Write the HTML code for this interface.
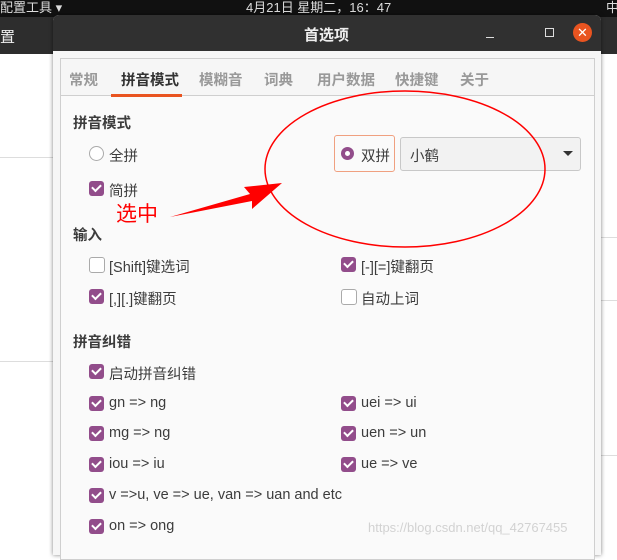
<!DOCTYPE html>
<html><head><meta charset="utf-8"><style>
body{margin:0;width:617px;height:549px;position:relative;overflow:hidden;background:#fff;font-family:"Liberation Sans","Noto Sans CJK SC",sans-serif;}
.a{position:absolute;}
.t{font-size:14.5px;color:#3c3c3c;white-space:nowrap;}
.cb{position:absolute;width:15px;height:15px;border-radius:3px;background:#924d8b;}
.cb::after{content:"";position:absolute;left:3px;top:3px;width:7px;height:4px;border-left:2px solid #fff;border-bottom:2px solid #fff;transform:rotate(-45deg);}
.ub{position:absolute;width:14px;height:14px;border-radius:3px;border:1px solid #aaa;background:#fff;}
.h{font-size:14.5px;font-weight:bold;color:#3c3c3c;}
</style></head><body>
<div class="a" style="left:0;top:0;width:617px;height:17px;background:#111;"></div>
<div class="a t" style="left:0;top:-3px;color:#ddd;font-size:13px;">配置工具 ▾</div>
<div class="a t" style="left:246px;top:-3px;color:#ddd;font-size:13px;">4月21日 星期二，16：47</div>
<div class="a t" style="left:606px;top:-3px;color:#ddd;font-size:13px;">中</div>
<div class="a" style="left:0;top:17px;width:617px;height:37px;background:#2d2d2d;"></div>
<div class="a t" style="left:0;top:26px;color:#eee;font-size:15px;">置</div>
<div class="a" style="left:0;top:157px;width:53px;height:1px;background:#ddd;"></div>
<div class="a" style="left:0;top:361px;width:53px;height:1px;background:#ddd;"></div>
<div class="a" style="left:601px;top:237px;width:16px;height:1px;background:#ddd;"></div>
<div class="a" style="left:601px;top:300px;width:16px;height:1px;background:#ddd;"></div>
<div class="a" style="left:601px;top:455px;width:16px;height:1px;background:#ddd;"></div>
<div class="a" style="left:53px;top:15px;width:548px;height:540px;background:#f6f6f6;border-radius:6px 6px 0 0;box-shadow:0 0 4px rgba(0,0,0,.5);"></div>
<div class="a" style="left:53px;top:15px;width:548px;height:36px;background:#303030;border-radius:6px 6px 0 0;"></div>
<div class="a t" style="left:304px;top:24px;color:#eee;font-weight:bold;font-size:15px;">首选项</div>
<div class="a" style="left:486px;top:37px;width:8px;height:1px;background:#ddd;"></div>
<div class="a" style="left:545px;top:28px;width:7px;height:7px;border:1px solid #ddd;"></div>
<div class="a" style="left:573px;top:23px;width:19px;height:19px;border-radius:50%;background:#e95420;color:#fff;font-size:13px;text-align:center;line-height:19px;">✕</div>
<div class="a" style="left:60px;top:58px;width:533px;height:500px;border:1px solid #cfcfcf;background:#fafafa;"></div>
<div class="a" style="left:61px;top:59px;width:533px;height:36px;background:#f6f6f6;border-bottom:1px solid #cfcfcf;"></div>
<div class="a" style="left:111px;top:94px;width:71px;height:3px;background:#e95420;"></div>
<div class="a t" style="left:69px;top:69px;color:#999;font-weight:bold;">常规</div>
<div class="a t" style="left:121px;top:69px;color:#333;font-weight:bold;">拼音模式</div>
<div class="a t" style="left:199px;top:69px;color:#999;font-weight:bold;">模糊音</div>
<div class="a t" style="left:264px;top:69px;color:#999;font-weight:bold;">词典</div>
<div class="a t" style="left:317px;top:69px;color:#999;font-weight:bold;">用户数据</div>
<div class="a t" style="left:395px;top:69px;color:#999;font-weight:bold;">快捷键</div>
<div class="a t" style="left:460px;top:69px;color:#999;font-weight:bold;">关于</div>
<div class="a h" style="left:73px;top:112px;">拼音模式</div>
<div class="a" style="left:89px;top:146px;width:13px;height:13px;border-radius:50%;border:1px solid #aaa;background:#fff;"></div>
<div class="a t" style="left:109px;top:145px;">全拼</div>
<div class="cb" style="left:89px;top:181px;"></div><div class="a t" style="left:109px;top:180px;">简拼</div>
<div class="a" style="left:334px;top:135px;width:59px;height:35px;border:1px solid #f0a080;border-radius:3px;background:#fafafa;"></div>
<div class="a" style="left:341px;top:147px;width:13px;height:13px;border-radius:50%;background:#924d8b;"><div class="a" style="left:4px;top:4px;width:5px;height:5px;border-radius:50%;background:#fff;"></div></div>
<div class="a t" style="left:361px;top:145px;">双拼</div>
<div class="a" style="left:400px;top:137px;width:179px;height:32px;border:1px solid #c8c8c8;border-radius:3px;background:#f2f2f2;"></div>
<div class="a t" style="left:410px;top:145px;">小鹤</div>
<div class="a" style="left:563px;top:151px;width:0;height:0;border-left:5px solid transparent;border-right:5px solid transparent;border-top:5px solid #333;"></div>
<div class="a h" style="left:73px;top:224px;">输入</div>
<div class="ub" style="left:89px;top:257px;"></div><div class="a t" style="left:109px;top:256px;">[Shift]键选词</div>
<div class="cb" style="left:341px;top:257px;"></div><div class="a t" style="left:361px;top:256px;">[-][=]键翻页</div>
<div class="cb" style="left:89px;top:289px;"></div><div class="a t" style="left:109px;top:288px;">[,][.]键翻页</div>
<div class="ub" style="left:341px;top:289px;"></div><div class="a t" style="left:361px;top:288px;">自动上词</div>
<div class="a h" style="left:73px;top:331px;">拼音纠错</div>
<div class="cb" style="left:89px;top:364px;"></div><div class="a t" style="left:109px;top:363px;">启动拼音纠错</div>
<div class="cb" style="left:89px;top:396px;"></div><div class="a t" style="left:109px;top:395px;">gn =&gt; ng</div>
<div class="cb" style="left:341px;top:396px;"></div><div class="a t" style="left:361px;top:395px;">uei =&gt; ui</div>
<div class="cb" style="left:89px;top:426px;"></div><div class="a t" style="left:109px;top:425px;">mg =&gt; ng</div>
<div class="cb" style="left:341px;top:426px;"></div><div class="a t" style="left:361px;top:425px;">uen =&gt; un</div>
<div class="cb" style="left:89px;top:457px;"></div><div class="a t" style="left:109px;top:456px;">iou =&gt; iu</div>
<div class="cb" style="left:341px;top:457px;"></div><div class="a t" style="left:361px;top:456px;">ue =&gt; ve</div>
<div class="cb" style="left:89px;top:488px;"></div><div class="a t" style="left:109px;top:487px;">v =&gt;u, ve =&gt; ue, van =&gt; uan and etc</div>
<div class="cb" style="left:89px;top:519px;"></div><div class="a t" style="left:109px;top:518px;">on =&gt; ong</div>
<div class="a" style="left:368px;top:520px;font-size:13px;color:rgba(200,200,200,.8);">https://blog.csdn.net/qq_42767455</div>
<svg class="a" style="left:0;top:0" width="617" height="549">
<ellipse cx="405" cy="169" rx="140" ry="78" fill="none" stroke="#f00" stroke-width="1.5"/>
<polygon points="170,217 250,194 244,187 282,183 252,209 252,201" fill="#f00"/>
</svg>
<div class="a" style="left:116px;top:198px;font-size:21px;color:#f00;">选中</div>
</body></html>
